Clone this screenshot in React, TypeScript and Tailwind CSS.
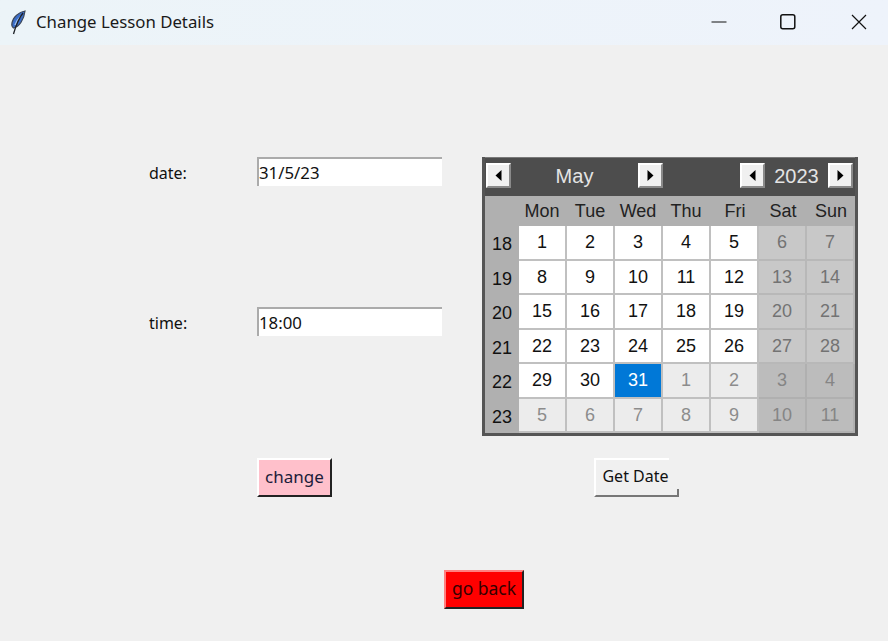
import React from "react";

const weeks = [
  { num: 18, days: [1, 2, 3, 4, 5, 6, 7] },
  { num: 19, days: [8, 9, 10, 11, 12, 13, 14] },
  { num: 20, days: [15, 16, 17, 18, 19, 20, 21] },
  { num: 21, days: [22, 23, 24, 25, 26, 27, 28] },
  { num: 22, days: [29, 30, 31, 1, 2, 3, 4] },
  { num: 23, days: [5, 6, 7, 8, 9, 10, 11] },
];

const dayNames = ["Mon", "Tue", "Wed", "Thu", "Fri", "Sat", "Sun"];

function Arrow({ dir }: { dir: "left" | "right" }) {
  return (
    <button className="w-[25px] h-[25px] shrink-0 bg-[#f0f0f0] border-2 border-t-white border-l-white border-r-[#8a8a8a] border-b-[#8a8a8a] flex items-center justify-center">
      <svg width="7" height="11" viewBox="0 0 7 11">
        <path d={dir === "left" ? "M6.500 0V11L0.500 5.500Z" : "M0.500 0V11L6.500 5.500Z"} fill="#000" />
      </svg>
    </button>
  );
}

function Field({ label, value }: { label: string; value: string }) {
  return (
    <div className="flex items-center h-[29px]">
      <label className="w-[108px] text-[16px] text-[#111] pt-[3px]">{label}</label>
      <div className="w-[185px] h-[29px] bg-white border-t-2 border-l-2 border-[#ababab] text-[16.800px] leading-[27px] text-[#111]">
        {value}
      </div>
    </div>
  );
}

function dayStyle(week: number, col: number) {
  const weekend = col >= 5;
  const other = (week === 4 && col >= 3) || week === 5;
  if (week === 4 && col === 2) return "bg-[#0078d7] text-white border-[#c0c0c0]";
  if (weekend && other) return "bg-[#bcbcbc] text-[#858585] border-[#b0b0b0]";
  if (weekend) return "bg-[#c8c8c8] text-[#737373] border-[#b8b8b8]";
  if (other) return "bg-[#ececec] text-[#8c8c8c] border-[#c0c0c0]";
  return "bg-white text-[#111] border-[#c0c0c0]";
}

function Calendar() {
  return (
    <div className="w-[376px] h-[279px] bg-[#4d4d4d] border-[3px] border-t-0 border-[#555] flex flex-col font-['Liberation_Sans',sans-serif]">
      <div className="h-[39px] shrink-0 flex items-start pt-[5px] text-[20px] leading-[27px] text-[#e4e4e4] border-t border-[#7a7a7a]">
        <div className="ml-[1px]"><Arrow dir="left" /></div>
        <div className="w-[127px] text-center">May</div>
        <Arrow dir="right" />
        <div className="ml-[77px]"><Arrow dir="left" /></div>
        <div className="w-[63px] text-center">2023</div>
        <Arrow dir="right" />
      </div>
      <div className="flex-1 bg-[#b0b0b0] grid grid-cols-[34px_repeat(7,48px)] grid-rows-[30px_repeat(6,1fr)] text-[18px]">
        <div />
        {dayNames.map((d, i) => (
          <div key={d} className={`text-[#222] flex items-center justify-center ${i < 4 ? "pr-[2px]" : ""}`}>{d}</div>
        ))}
        {weeks.map((w, i) => (
          <React.Fragment key={w.num}>
            <div className="text-[#111] flex items-center justify-center pt-[3px]">{w.num}</div>
            {w.days.map((d, j) => (
              <div key={j} className={`flex items-center justify-center pt-[1px] border-r-2 border-b-2 ${dayStyle(i, j)}`}>{d}</div>
            ))}
          </React.Fragment>
        ))}
      </div>
    </div>
  );
}

export default function App() {
  return (
    <div className="w-[888px] h-[641px] bg-[#f0f0f0] flex flex-col font-['Noto_Sans',sans-serif] overflow-hidden">
      <header className="h-[45px] shrink-0 bg-gradient-to-r from-[#ecf4f8] to-[#eef3fb] flex items-center">
        <svg className="ml-[10px]" width="16" height="25" viewBox="0 0 16 25">
          <path d="M15 1C9 2 3 7 2 13C1.500 15 2 17 3.500 18C9 17 14 10 15 1Z" fill="#3a6dc8" stroke="#3c4656" strokeWidth="1.200" />
          <path d="M11 6C8 9 6 12 5 15" fill="none" stroke="#9cc0ee" strokeWidth="1.500" />
          <path d="M13 3C9 8 6 15 3.500 24" fill="none" stroke="#1d2026" strokeWidth="1.300" />
        </svg>
        <span className="ml-[10px] mb-[1px] text-[16.800px] text-[#1a1a1a]">Change Lesson Details</span>
        <div className="ml-auto flex items-center mb-[2px]">
          <svg width="16" height="16" viewBox="0 0 16 16" className="mr-[53px]">
            <path d="M0.500 8H15.500" stroke="#111" strokeWidth="1" />
          </svg>
          <svg width="16" height="16" viewBox="0 0 16 16" className="mr-[55px]">
            <rect x="0.800" y="0.800" width="14" height="14" rx="2" fill="none" stroke="#111" strokeWidth="1.500" />
          </svg>
          <svg width="16" height="16" viewBox="0 0 16 16" className="mr-[21px]">
            <path d="M1 1L15 15M15 1L1 15" stroke="#111" strokeWidth="1.200" />
          </svg>
        </div>
      </header>

      <main className="flex-1 flex flex-col pt-[112px]">
        <div className="flex">
          <div className="ml-[149px] w-[333px] flex flex-col gap-[121px]">
            <Field label="date:" value="31/5/23" />
            <Field label="time:" value="18:00" />
          </div>
          <Calendar />
        </div>
        <div className="flex mt-[22px] text-[#111]">
          <button className="ml-[257px] w-[75px] h-[39px] pb-[2px] bg-[#ffc0cb] border-2 border-t-white border-l-white border-r-[#222] border-b-[#222] text-[17px] text-[#1c1c3a]">change</button>
          <button className="relative ml-[262px] w-[85px] h-[39px] pb-[3px] pt-[1px] pr-[4px] bg-[#f0f0f0] border-b-2 border-b-[#777] border-l-2 border-l-white text-[16px]">
            Get Date
            <span className="absolute left-0 top-0 w-[73px] h-[2px] bg-white" />
            <span className="absolute right-0 bottom-0 w-[2px] h-[6px] bg-[#777]" />
          </button>
        </div>
        <div className="flex mt-[73px]">
          <button className="ml-[444px] w-[80px] h-[39px] pb-[2px] bg-[#ff0000] border-2 border-t-[#ff8080] border-l-[#ff8080] border-r-[#222] border-b-[#222] text-[17.500px] text-[#300]">go back</button>
        </div>
      </main>
    </div>
  );
}
